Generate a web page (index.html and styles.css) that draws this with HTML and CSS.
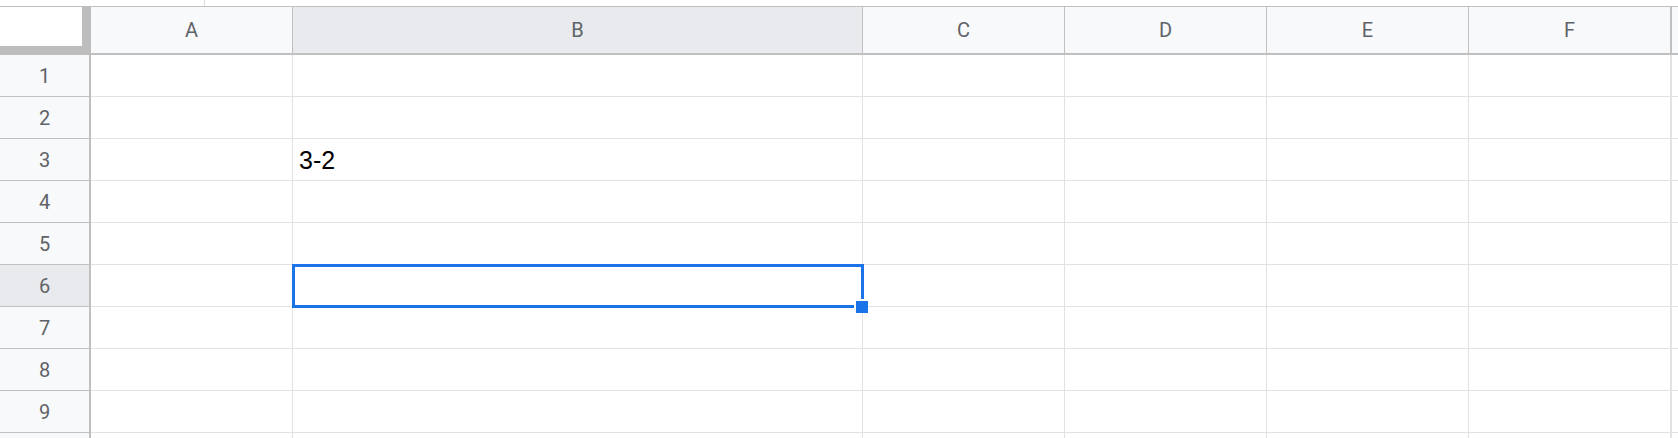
FILE: index.html
```html
<!DOCTYPE html>
<html lang="en">
<head>
<meta charset="utf-8">
<title>Sheet</title>
<link rel="stylesheet" href="styles.css">
</head>
<body>
<div class="topstrip"><span class="tick"></span></div>
<div class="sheet">
  <div class="corner"></div>
  <div class="colhead">A</div>
  <div class="colhead sel">B</div>
  <div class="colhead">C</div>
  <div class="colhead">D</div>
  <div class="colhead">E</div>
  <div class="colhead last">F</div>
  <div class="colhead rest"></div>

  <div class="rowhead">1</div><div class="cell"></div><div class="cell"></div><div class="cell"></div><div class="cell"></div><div class="cell"></div><div class="cell last"></div><div class="cell rest"></div>
  <div class="rowhead">2</div><div class="cell"></div><div class="cell"></div><div class="cell"></div><div class="cell"></div><div class="cell"></div><div class="cell last"></div><div class="cell rest"></div>
  <div class="rowhead">3</div><div class="cell"></div><div class="cell text">3-2</div><div class="cell"></div><div class="cell"></div><div class="cell"></div><div class="cell last"></div><div class="cell rest"></div>
  <div class="rowhead">4</div><div class="cell"></div><div class="cell"></div><div class="cell"></div><div class="cell"></div><div class="cell"></div><div class="cell last"></div><div class="cell rest"></div>
  <div class="rowhead">5</div><div class="cell"></div><div class="cell"></div><div class="cell"></div><div class="cell"></div><div class="cell"></div><div class="cell last"></div><div class="cell rest"></div>
  <div class="rowhead sel">6</div><div class="cell"></div><div class="cell active"><div class="selbox"><span class="handle"></span></div></div><div class="cell"></div><div class="cell"></div><div class="cell"></div><div class="cell last"></div><div class="cell rest"></div>
  <div class="rowhead">7</div><div class="cell"></div><div class="cell"></div><div class="cell"></div><div class="cell"></div><div class="cell"></div><div class="cell last"></div><div class="cell rest"></div>
  <div class="rowhead">8</div><div class="cell"></div><div class="cell"></div><div class="cell"></div><div class="cell"></div><div class="cell"></div><div class="cell last"></div><div class="cell rest"></div>
  <div class="rowhead">9</div><div class="cell"></div><div class="cell"></div><div class="cell"></div><div class="cell"></div><div class="cell"></div><div class="cell last"></div><div class="cell rest"></div>
  <div class="rowhead partial"></div><div class="cell partial"></div><div class="cell partial"></div><div class="cell partial"></div><div class="cell partial"></div><div class="cell partial"></div><div class="cell last partial"></div><div class="cell rest partial"></div>
</div>
</body>
</html>
```
FILE: styles.css
```css
html, body {
  margin: 0;
  padding: 0;
  background: #ffffff;
  overflow: hidden;
  width: 1678px;
  height: 438px;
}

.topstrip {
  height: 6px;
  display: flex;
}

.tick {
  margin-left: 204px;
  width: 1px;
  height: 6px;
  background: #dadce0;
}

.sheet {
  display: grid;
  grid-template-columns: 91px 202px 570px 202px 202px 202px 203px 1fr;
  grid-template-rows: 49px repeat(9, 42px) 5px;
  font-family: Roboto, "Liberation Sans", sans-serif;
}

.corner {
  box-sizing: border-box;
  background: #ffffff;
  border-top: 1px solid #c0c0c0;
  border-right: 9px solid #bdbdbd;
  border-bottom: 9px solid #bdbdbd;
}

.colhead {
  box-sizing: border-box;
  background: #f8f9fa;
  border-top: 1px solid #c0c0c0;
  border-right: 1px solid #c0c0c0;
  border-bottom: 2px solid #c0c0c0;
  display: flex;
  align-items: center;
  justify-content: center;
  font-size: 20px;
  color: #5f6368;
}

.colhead.sel {
  background: #e8eaed;
}

.colhead.last {
  border-right: 2px solid #c0c0c0;
}

.colhead.rest {
  border-right: none;
}

.rowhead {
  box-sizing: border-box;
  background: #f8f9fa;
  border-right: 2px solid #c0c0c0;
  border-bottom: 1px solid #c0c0c0;
  display: flex;
  align-items: center;
  justify-content: center;
  font-size: 20px;
  color: #5f6368;
}

.rowhead.sel {
  background: #e8eaed;
}

.cell {
  box-sizing: border-box;
  border-right: 1px solid #e2e2e2;
  border-bottom: 1px solid #e2e2e2;
}

.cell.last {
  border-right: 2px solid #e2e2e2;
}

.cell.rest {
  border-right: none;
}

.rowhead.partial,
.cell.partial {
  border-bottom: none;
}

.cell.text {
  display: flex;
  align-items: flex-end;
  padding: 0 0 7px 6px;
  font-family: "Liberation Sans", Arial, sans-serif;
  font-size: 25px;
  line-height: 1;
  color: #000000;
}

.cell.active {
  position: relative;
}

.selbox {
  position: absolute;
  left: -1px;
  top: -1px;
  width: 572px;
  height: 44px;
  box-sizing: border-box;
  border: 3px solid #1a73e8;
  z-index: 2;
}

.handle {
  position: absolute;
  left: 559px;
  top: 32px;
  width: 12px;
  height: 12px;
  background: #1a73e8;
  border: 2px solid #ffffff;
  border-right-width: 0;
  border-bottom-width: 0;
}
```
